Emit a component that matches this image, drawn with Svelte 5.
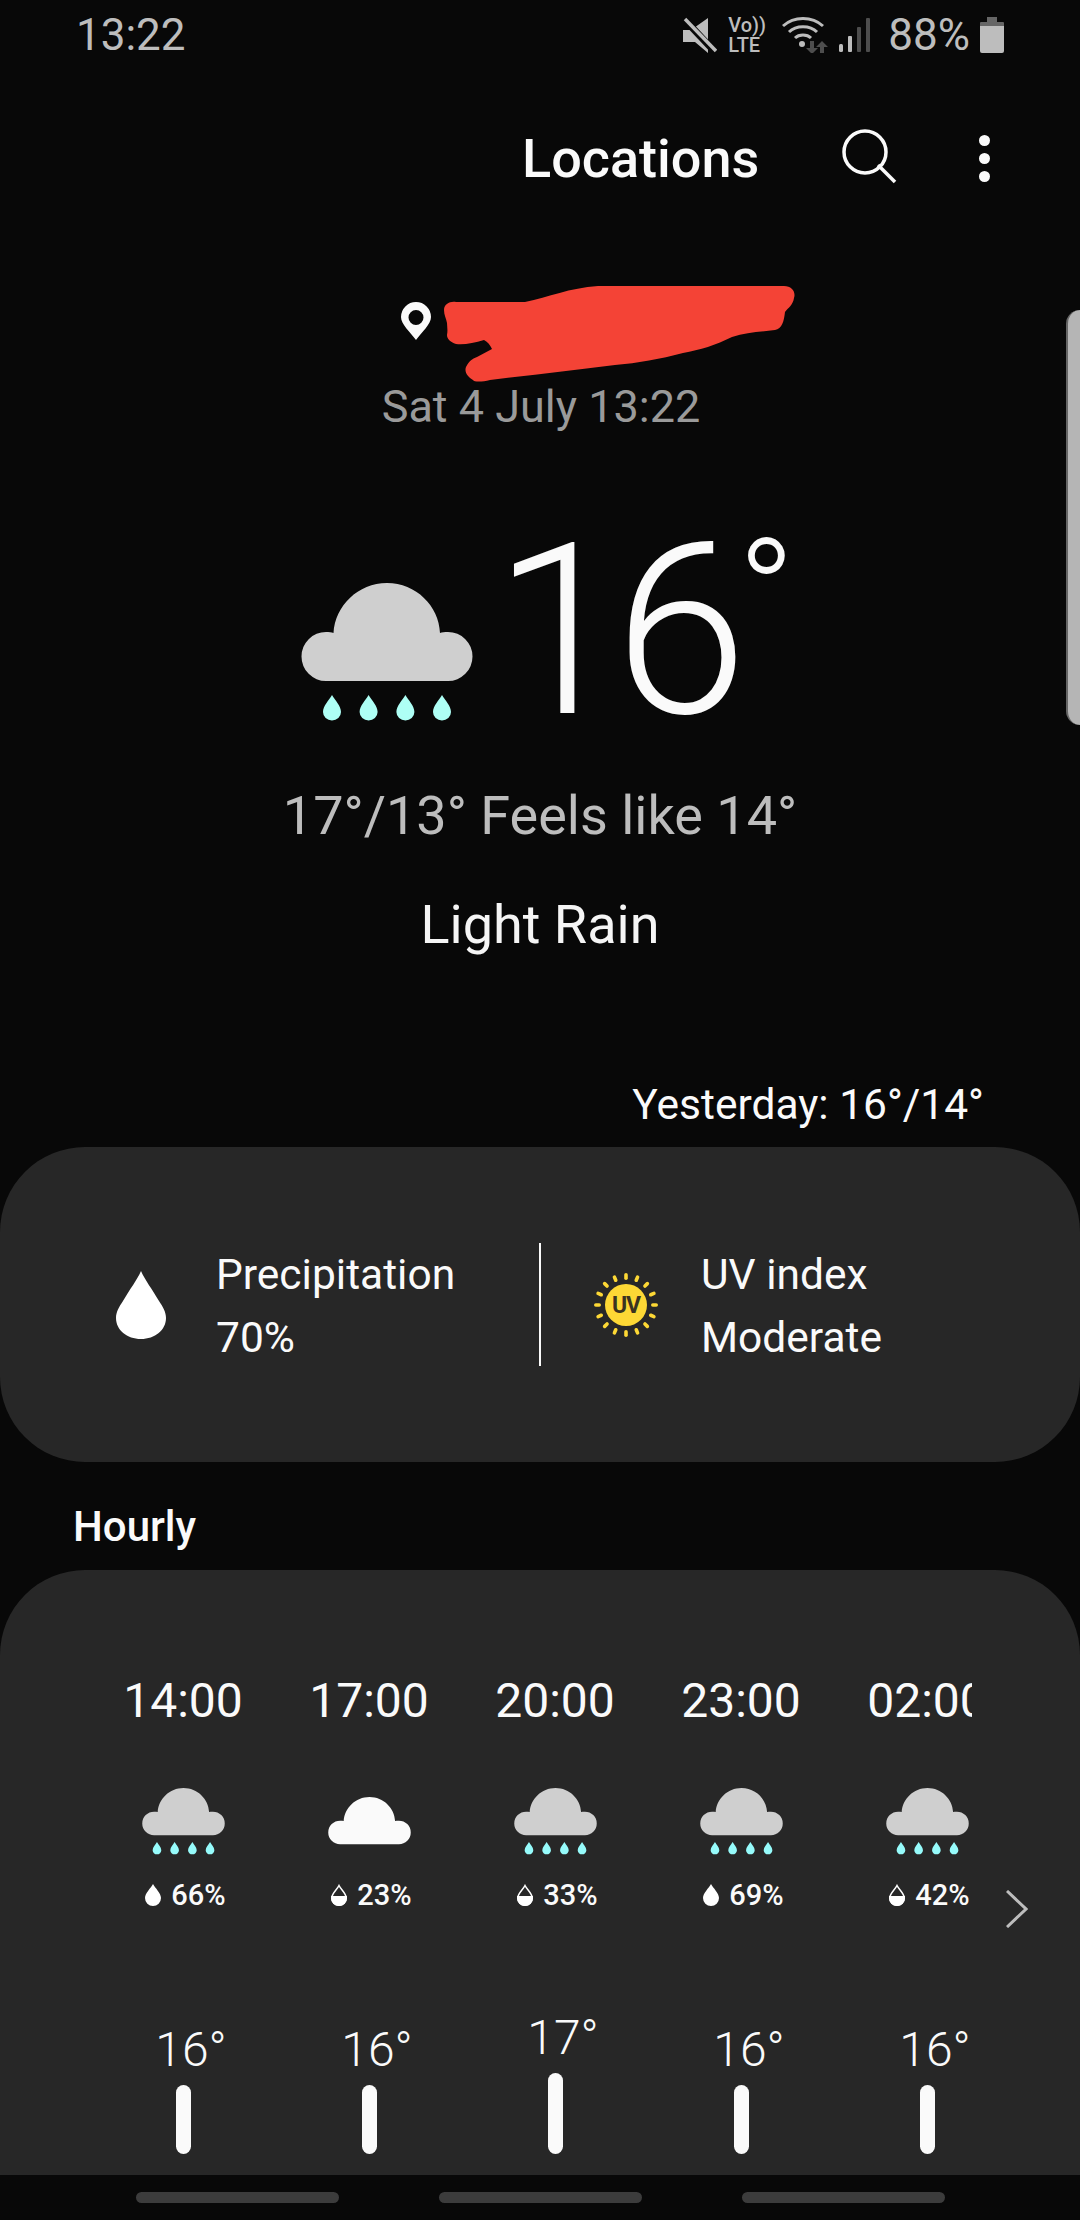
<script>
  const hours = [
    { time: '14:00', rain: true, pct: 66, full: true, temp: 16, bar: 69 },
    { time: '17:00', rain: false, pct: 23, full: false, temp: 16, bar: 69 },
    { time: '20:00', rain: true, pct: 33, full: false, temp: 17, bar: 81 },
    { time: '23:00', rain: true, pct: 69, full: true, temp: 16, bar: 69 },
    { time: '02:00', rain: true, pct: 42, full: false, temp: 16, bar: 69 }
  ]
  const rays = Array.from({ length: 16 }, (_, i) => i * 22.5)
  const dropX = [31, 67.6, 104.4, 141]
</script>

{#snippet cloud(width, rain, tint)}
  <svg {width} height={width * 138 / 172} viewBox="0 0 172 138" class="cloud">
    <path
      fill={rain ? '#cfcfcf' : '#fafafa'}
      d="M25 98a24.5 24.5 0 0 1 0-49c3 0 5.500.3 7.500 1C34 23 57 0 86 0s52 23 53 50c2-.7 4.500-1 8-1a24.500 24.500 0 0 1 0 49z"
    />
    {#if rain}
      {#each dropX as x}
        <path fill={tint} d="M{x} 112c3 5 9 11 9 17a9 8.500 0 0 1-18 0c0-6 6-12 9-17z" />
      {/each}
    {/if}
  </svg>
{/snippet}

{#snippet pctDrop(full)}
  <svg width="18" height="22" viewBox="0 0 18 22" class="pct-drop">
    {#if full}
      <path fill="#fff" d="M9 0c2 4 8 9 8 14a8 8 0 0 1-16 0C1 9 7 4 9 0z" />
    {:else}
      <path fill="none" stroke="#fff" stroke-width="1.500" d="M9 1.500c2 4 7.300 8 7.300 12.500a7.300 7.300 0 0 1-14.600 0C1.700 9.500 7 5.500 9 1.500z" />
      <path fill="#fff" d="M1 12h16v2a8 8 0 0 1-16 0z" />
    {/if}
  </svg>
{/snippet}

<div class="screen">
  <div class="status">
    <span class="clock">13:22</span>
    <div class="status-icons">
      <svg width="34" height="36" viewBox="0 0 34 36">
        <path fill="#bdbdbd" d="M0 13h8L25 1v35L12 25H0z" />
        <path stroke="#080808" stroke-width="7" d="M2 3l31 33" />
        <path stroke="#bdbdbd" stroke-width="3.500" d="M2 2l31 32" />
      </svg>
      <div class="volte"><span>Vo))</span><span>LTE</span></div>
      <svg class="wifi" width="49" height="36" viewBox="0 0 49 36">
        <path fill="none" stroke="#bdbdbd" stroke-width="3" d="M1 9c11-10 29-10 40 0M7 15c7-7 21-7 28 0M13 21c4-4 12-4 16 0" />
        <circle cx="20" cy="27" r="3" fill="#bdbdbd" />
        <path fill="#4d4d4d" d="M28 24h4v7h4l-6 6-6-6h4zM40 24l6 6h-4v7h-4v-7h-4z" />
      </svg>
      <svg class="signal" width="32" height="34" viewBox="0 0 32 34">
        <rect x="0" y="26" width="4" height="8" rx="1.500" fill="#bdbdbd" />
        <rect x="9" y="18" width="4" height="16" rx="1" fill="#bdbdbd" />
        <rect x="18" y="9" width="4" height="25" rx="1" fill="#4d4d4d" />
        <rect x="27" y="0" width="4" height="34" rx="1" fill="#4d4d4d" />
      </svg>
      <span class="batt-text">88%</span>
      <svg class="batt" width="24" height="36" viewBox="0 0 24 36">
        <path fill="#666" d="M7 0h10v5h6a1 1 0 0 1 1 1v5H0V6a1 1 0 0 1 1-1h6z" />
        <path fill="#bdbdbd" d="M0 9h24v25a2 2 0 0 1-2 2H2a2 2 0 0 1-2-2z" />
      </svg>
    </div>
  </div>

  <header class="appbar">
    <span class="appbar-title">Locations</span>
    <svg width="56" height="56" viewBox="0 0 56 56" class="search">
      <circle cx="23" cy="23" r="21" fill="none" stroke="#fafafa" stroke-width="3.500" />
      <path stroke="#fafafa" stroke-width="3.500" d="M36 36l17 17" fill="none" />
    </svg>
    <div class="more"><i></i><i></i><i></i></div>
  </header>

  <div class="place">
    <svg width="30" height="38" viewBox="0 0 30 38" class="pin">
      <path fill="#fafafa" fill-rule="evenodd" d="M15 0a15 15 0 0 1 15 15c0 7-9 15-15 23C9 30 0 22 0 15A15 15 0 0 1 15 0zm0 8a7.500 7.500 0 1 0 0 15 7.500 7.500 0 0 0 0-15z" />
    </svg>
    <svg width="352" height="97" viewBox="0 0 352 97">
      <path fill="#f44336" d="M0 25C0 19 6 16 12 17L81 17C105 12 125 3 154 1L340 1C348 1 352 7 350 13C349 20 344 23 341 27C340 36 338 44 331 45C316 47 302 47 288 52C272 60 256 65 239 68C216 74 194 78 171 80C130 85 88 90 46 95C38 97 30 97 29 95C24 92 20 87 22 82C25 76 28 74 33 72L48 64C46 60 44 57 40 55C30 58 20 60 12 59C6 57 3 54 3 50C4 45 3 42 3 38C2 33 0 30 0 25z" />
    </svg>
  </div>
  <p class="date">Sat 4 July 13:22</p>

  <div class="hero">
    {@render cloud(172, true, '#aefff5')}
    <span class="hero-temp">16</span>
    <span class="hero-deg">°</span>
  </div>
  <p class="range">17°/13° Feels like 14°</p>
  <p class="cond">Light Rain</p>
  <p class="yesterday">Yesterday: 16°/14°</p>

  <section class="card stats">
    <div class="stat">
      <svg width="50" height="68" viewBox="0 0 50 68" class="stat-icon">
        <path fill="#fff" d="M25 0C29 9 36 18 43 30c4 6 7 11 7 17 0 12-11 21-25 21S0 59 0 47c0-6 3-11 7-17C14 18 21 9 25 0z" />
      </svg>
      <div class="stat-text"><span>Precipitation</span><span>70%</span></div>
    </div>
    <div class="stat stat-uv">
      <svg width="66" height="66" viewBox="-33 -33 66 66" class="uv-icon">
        {#each rays as a}
          <rect x="-1.800" y="-32" width="3.600" height="7" rx="1.800" fill="#fdd835" transform="rotate({a})" />
        {/each}
        <circle r="21" fill="#fdd835" />
        <text y="8" text-anchor="middle" class="uv-label">UV</text>
      </svg>
      <div class="stat-text"><span>UV index</span><span>Moderate</span></div>
    </div>
  </section>

  <h2 class="hourly-title">Hourly</h2>
  <section class="card hourly">
    <div class="hours">
      {#each hours as h}
        <div class="hour">
          <span class="hour-time">{h.time}</span>
          <div class="hour-icon" class:dry={!h.rain}>{@render cloud(83, h.rain, '#96fbfb')}</div>
          <div class="hour-pct">{@render pctDrop(h.full)}<span>{h.pct}%</span></div>
          <div class="hour-chart">
            <span class="hour-temp">{h.temp}°</span>
            <i class="hour-bar" style="height: {h.bar}px"></i>
          </div>
        </div>
      {/each}
    </div>
    <svg width="22" height="38" viewBox="0 0 22 38" class="chevron">
      <path fill="none" stroke="#bdbdbd" stroke-width="3" d="M1 1l19 18L1 37" />
    </svg>
  </section>

  <nav class="softkeys"><i></i><i></i><i></i></nav>

  <div class="handle"></div>
</div>

<style>
  :global(body) {
    margin: 0;
    background: #080808;
  }
  .screen {
    position: relative;
    width: 1080px;
    height: 2220px;
    overflow: hidden;
    background: #080808;
    color: #fafafa;
    font-family: Roboto, "Noto Sans", sans-serif;
    display: flex;
    flex-direction: column;
  }
  p,
  h2 {
    margin: 0;
  }

  .status {
    height: 70px;
    flex: none;
    display: flex;
    align-items: center;
    justify-content: space-between;
    padding: 0 76px 0 76px;
    color: #bdbdbd;
    font-size: 44px;
  }
  .status-icons {
    display: flex;
    align-items: center;
  }
  .volte {
    width: 37px;
    margin-left: 11px;
    display: flex;
    flex-direction: column;
    font-size: 20px;
    line-height: 20px;
    font-weight: 500;
    white-space: nowrap;
  }
  .wifi {
    margin-left: 17px;
  }
  .signal {
    margin-left: 8px;
  }
  .batt-text {
    margin-left: 17px;
  }
  .batt {
    margin-left: 10px;
  }

  .appbar {
    height: 176px;
    flex: none;
    display: flex;
    align-items: center;
    padding-left: 522px;
  }
  .appbar-title {
    font-size: 54px;
    font-weight: 500;
  }
  .search {
    margin-left: 83px;
    margin-top: -2px;
  }
  .more {
    margin-left: 81px;
    display: flex;
    flex-direction: column;
    gap: 7px;
  }
  .more i {
    width: 11px;
    height: 11px;
    border-radius: 50%;
    background: #fafafa;
  }

  .place {
    margin-top: 39px;
    height: 97px;
    flex: none;
    display: flex;
    gap: 13px;
    padding-left: 401px;
  }
  .pin {
    margin-top: 17px;
  }
  .date {
    line-height: 50px;
    font-size: 45px;
    text-align: center;
    color: #9a9a9a;
    padding-left: 2px;
  }

  .hero {
    margin-top: 79px;
    height: 240px;
    flex: none;
    display: flex;
    padding-left: 301px;
  }
  .hero .cloud {
    margin-top: 72px;
  }
  .hero-temp {
    margin-left: 20px;
    font-size: 240px;
    line-height: 240px;
    font-weight: 300;
    letter-spacing: -12px;
  }
  .hero-deg {
    margin-left: 2px;
    margin-top: 8px;
    font-size: 154px;
    line-height: 154px;
    font-weight: 300;
  }
  .range {
    margin-top: 35px;
    line-height: 60px;
    font-size: 54px;
    text-align: center;
    color: #bdbdbd;
  }
  .cond {
    margin-top: 49px;
    line-height: 60px;
    font-size: 54px;
    text-align: center;
    color: #f5f5f5;
  }
  .yesterday {
    margin-top: 125px;
    padding-right: 96px;
    line-height: 50px;
    font-size: 42.5px;
    text-align: right;
  }

  .card {
    background: #272727;
    border-radius: 85px;
  }
  .stats {
    margin-top: 17px;
    height: 315px;
    flex: none;
    display: grid;
    grid-template-columns: 540px 1fr;
    align-items: center;
  }
  .stat {
    display: flex;
    align-items: center;
    padding-left: 116px;
    height: 123px;
  }
  .stat-icon {
    margin-right: 50px;
  }
  .stat-uv {
    border-left: 2px solid #fafafa;
    padding-left: 52px;
    margin-left: -1px;
  }
  .uv-icon {
    margin-right: 42px;
  }
  .uv-label {
    font-size: 23px;
    font-weight: 700;
    letter-spacing: -1px;
    fill: #3a3320;
  }
  .stat-text {
    display: flex;
    flex-direction: column;
    font-size: 42.5px;
    line-height: 63px;
    padding-top: 2px;
  }

  .hourly-title {
    margin-top: 40px;
    padding-left: 73px;
    line-height: 50px;
    font-size: 42px;
    font-weight: 500;
  }
  .hourly {
    position: relative;
    margin-top: 18px;
    height: 605px;
    flex: none;
    border-radius: 85px 85px 0 0;
    padding: 101px 108px 0 90px;
    box-sizing: border-box;
  }
  .hours {
    display: flex;
    overflow: hidden;
  }
  .hour {
    flex: 0 0 186px;
    display: flex;
    flex-direction: column;
    align-items: center;
  }
  .hour-time {
    line-height: 60px;
    font-size: 48px;
  }
  .hour-icon {
    margin-top: 57px;
    height: 66px;
  }
  .hour-icon.dry {
    padding-top: 9px;
    height: 57px;
  }
  .hour-icon .cloud {
    display: block;
  }
  .hour-pct {
    margin-top: 23px;
    height: 36px;
    display: flex;
    align-items: center;
    gap: 9px;
    font-size: 29px;
    font-weight: 500;
    padding-left: 4px;
  }
  .hour-chart {
    height: 241px;
    align-self: stretch;
    display: flex;
    flex-direction: column;
    align-items: center;
    justify-content: flex-end;
  }
  .hour-temp {
    line-height: 50px;
    font-size: 48px;
    font-weight: 300;
    margin-bottom: 10px;
    padding-left: 16px;
  }
  .hour-bar {
    width: 15px;
    border-radius: 8px;
    background: #fafafa;
  }
  .chevron {
    position: absolute;
    left: 1006px;
    top: 320px;
  }

  .softkeys {
    flex: 1;
    display: flex;
    justify-content: center;
    gap: 100px;
    padding-top: 17px;
  }
  .softkeys i {
    width: 203px;
    height: 11px;
    border-radius: 6px;
    background: #3c3c3c;
  }

  .handle {
    position: absolute;
    right: 0;
    top: 310px;
    width: 12px;
    height: 415px;
    background: #b5b5b5;
    border-left: 2px solid #666;
    border-radius: 14px 0 0 14px;
  }
</style>
